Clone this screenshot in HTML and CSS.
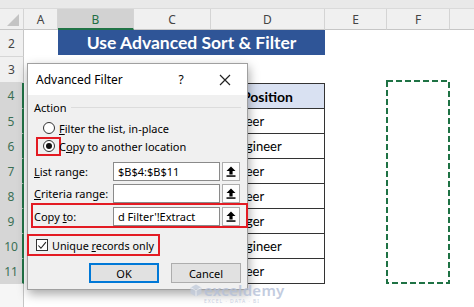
FILE: index.html
```html
<!DOCTYPE html>
<html>
<head>
<meta charset="utf-8">
<link rel="stylesheet" href="styles.css">
</head>
<body>
<div class="sheet">
  <div class="topbar"></div>
  <div class="grid">
    <div class="ch corner"><span class="tri"></span></div>
    <div class="ch">A</div>
    <div class="ch sel">B</div>
    <div class="ch">C</div>
    <div class="ch">D</div>
    <div class="ch">E</div>
    <div class="ch">F</div>
    <div class="ch last"></div>

    <div class="rh">2</div>
    <div class="c"></div>
    <div class="c banner">Use Advanced Sort &amp; Filter</div>
    <div class="c"></div><div class="c"></div><div class="c"></div>

    <div class="rh">3</div>
    <div class="c"></div><div class="c"></div><div class="c"></div><div class="c"></div><div class="c"></div><div class="c"></div><div class="c"></div>

    <div class="rh rsel">4</div>
    <div class="c"></div><div class="c th"></div><div class="c th"></div><div class="c th thd">Position</div><div class="c"></div><div class="c"></div><div class="c"></div>

    <div class="rh rsel">5</div>
    <div class="c"></div><div class="c td"></div><div class="c td"></div><div class="c td tdd">Engineer</div><div class="c"></div><div class="c"></div><div class="c"></div>

    <div class="rh rsel">6</div>
    <div class="c"></div><div class="c td"></div><div class="c td"></div><div class="c td tdd">Sr. Engineer</div><div class="c"></div><div class="c"></div><div class="c"></div>

    <div class="rh rsel">7</div>
    <div class="c"></div><div class="c td"></div><div class="c td"></div><div class="c td tdd">Engineer</div><div class="c"></div><div class="c"></div><div class="c"></div>

    <div class="rh rsel">8</div>
    <div class="c"></div><div class="c td"></div><div class="c td"></div><div class="c td tdd">Engineer</div><div class="c"></div><div class="c"></div><div class="c"></div>

    <div class="rh rsel">9</div>
    <div class="c"></div><div class="c td"></div><div class="c td"></div><div class="c td tdd">Manager</div><div class="c"></div><div class="c"></div><div class="c"></div>

    <div class="rh rsel">10</div>
    <div class="c"></div><div class="c td"></div><div class="c td"></div><div class="c td tdd">Sr. Engineer</div><div class="c"></div><div class="c"></div><div class="c"></div>

    <div class="rh rsel">11</div>
    <div class="c"></div><div class="c td"></div><div class="c td"></div><div class="c td tdd">Engineer</div><div class="c"></div><div class="c"></div><div class="c"></div>

    <div class="rh rlast"></div>
    <div class="c"></div><div class="c"></div><div class="c"></div><div class="c"></div><div class="c"></div><div class="c"></div><div class="c"></div>
  </div>

  <svg class="marquee" width="66" height="206" viewBox="0 0 66 206">
    <rect x="1" y="1" width="62" height="202" fill="none" stroke="#1f7244" stroke-width="2" stroke-dasharray="6 3"/>
  </svg>

  <div class="dialog">
    <div class="titlebar">
      <span class="title">Advanced Filter</span>
      <span class="help">?</span>
      <svg class="close" width="12" height="12" viewBox="0 0 12 12"><path d="M1 1L11 11M11 1L1 11" stroke="#222" stroke-width="1.2"/></svg>
    </div>
    <div class="body">
      <div class="legend"><span>Action</span><span class="gline"></span></div>
      <div class="radio-row">
        <span class="rwrap"><span class="radio"></span></span>
        <span class="rlabel"><u>F</u>ilter the list, in-place</span>
      </div>
      <div class="radio-row">
        <span class="rwrap red"><span class="radio on"></span></span>
        <span class="rlabel">C<u>o</u>py to another location</span>
      </div>
      <div class="field first">
        <span class="flabel"><u>L</u>ist range:</span>
        <span class="input">$B$4:$B$11</span>
        <span class="rbtn"><svg width="10" height="11" viewBox="0 0 10 11"><path d="M5 0.5L9.5 5H6.6V8.5H3.4V5H0.5Z" fill="#000"/><rect x="0.5" y="9.3" width="9" height="1.5" fill="#000"/></svg></span>
      </div>
      <div class="field">
        <span class="flabel"><u>C</u>riteria range:</span>
        <span class="input"></span>
        <span class="rbtn"><svg width="10" height="11" viewBox="0 0 10 11"><path d="M5 0.5L9.5 5H6.6V8.5H3.4V5H0.5Z" fill="#000"/><rect x="0.5" y="9.3" width="9" height="1.5" fill="#000"/></svg></span>
      </div>
      <div class="redrow">
        <div class="field">
          <span class="flabel">Copy <u>t</u>o:</span>
          <span class="input">d Filter'!Extract</span>
          <span class="rbtn"><svg width="10" height="11" viewBox="0 0 10 11"><path d="M5 0.5L9.5 5H6.6V8.5H3.4V5H0.5Z" fill="#000"/><rect x="0.5" y="9.3" width="9" height="1.5" fill="#000"/></svg></span>
        </div>
      </div>
      <div class="unique">
        <span class="cbox"><svg width="11" height="11" viewBox="0 0 11 11"><path d="M1.5 5.5L4.3 8.5L9.8 1.8" fill="none" stroke="#222" stroke-width="1.2"/></svg></span>
        <span class="ulabel">Unique <u>r</u>ecords only</span>
      </div>
      <div class="buttons">
        <span class="btn ok">OK</span>
        <span class="btn">Cancel</span>
      </div>
    </div>
  </div>

  <div class="watermark">
    <svg class="wm-icon" width="12" height="13" viewBox="0 0 12 13"><path d="M6 0.5L11.5 3.6V9.4L6 12.5L0.5 9.4V3.6Z" fill="#c3ccdc"/><path d="M6 6.5L11.5 3.6M6 6.5L0.5 3.6M6 6.5V12.5" stroke="#eef1f6" stroke-width="1"/></svg>
    <div class="wm-text">
      <span class="wm-name">exceldemy</span>
      <span class="wm-sub">EXCEL · DATA · BI</span>
    </div>
  </div>
</div>
</body>
</html>
```

FILE: styles.css
```css
* { box-sizing: border-box; }
html, body { margin: 0; padding: 0; background: #fff; }
.sheet {
  position: relative;
  width: 474px;
  height: 307px;
  overflow: hidden;
  font-family: Lato, "Liberation Sans", sans-serif;
}
.topbar { height: 9px; background: #e9e9e9; border-bottom: 1px solid #dadada; }
.grid {
  display: grid;
  grid-template-columns: 24px 34px 76px 77px 114px 62px 63px 24px;
  grid-template-rows: 21px 27px 26px 26px 25px 25px 25px 25px 25px 25px 25px 30px;
}
.ch {
  background: #f0f0f0;
  border-right: 1px solid #d4d4d4;
  border-bottom: 1px solid #c6c6c6;
  font-family: "Noto Sans", sans-serif;
  font-size: 12px;
  color: #444;
  display: flex;
  align-items: center;
  justify-content: center;
  padding-top: 1px;
}
.ch.sel { background: #d2d2d2; color: #1f6e43; border-bottom: 2px solid #217346; }
.ch.last { border-right: none; }
.corner { position: relative; }
.tri {
  position: absolute;
  right: 4px;
  bottom: 3px;
  width: 0;
  height: 0;
  border-left: 12px solid transparent;
  border-bottom: 12px solid #c4c4c4;
}
.rh {
  background: #f0f0f0;
  border-right: 1px solid #c6c6c6;
  border-bottom: 1px solid #d6d6d6;
  font-family: "Noto Sans", sans-serif;
  font-size: 12px;
  color: #444;
  display: flex;
  align-items: center;
  justify-content: center;
}
.rh.rsel { background: #d6d6d6; color: #3a6f54; border-right: 2px solid #217346; }
.rh.rlast { background: #f6f6f6; border-bottom: none; }
.c { background: #fff; }
.banner {
  grid-column: span 3;
  background: #2f5597;
  color: #fff;
  font-weight: 700;
  font-size: 17.5px;
  display: flex;
  align-items: center;
  justify-content: center;
  margin-bottom: 2px;
}
.th {
  background: #d9e1f2;
  border: 1px solid #333;
  border-left: none;
  font-weight: 700;
  font-size: 14px;
  display: flex;
  align-items: center;
  justify-content: center;
}
.td {
  border-right: 1px solid #333;
  border-bottom: 1px solid #333;
  font-size: 13px;
  display: flex;
  align-items: center;
  padding-left: 3px;
  color: #000;
}
.marquee { position: absolute; left: 386px; top: 80px; }

.dialog {
  position: absolute;
  left: 27px;
  top: 63px;
  width: 221px;
  height: 227px;
  background: #f0f0f0;
  border: 1px solid #a0a0a0;
  box-shadow: 1px 4px 10px rgba(0,0,0,0.35);
  font-family: "Noto Sans", sans-serif;
  font-size: 11px;
  color: #000;
}
.titlebar {
  height: 31px;
  background: #fff;
  display: flex;
  align-items: center;
  padding-left: 8px;
  font-size: 12px;
}
.title { flex: 1; }
.help { width: 14px; text-align: center; margin-right: 31px; font-size: 12px; }
.close { margin-right: 16px; }
.body { padding: 5px 6px 0 6px; display: flex; flex-direction: column; }
.legend { height: 14px; display: flex; align-items: center; gap: 4px; }
.gline { flex: 1; height: 1px; background: #dcdcdc; margin-top: 1px; }
.radio-row { height: 18px; display: flex; align-items: center; }
.legend + .radio-row { margin-top: 5px; }
.rwrap {
  width: 25px;
  height: 19px;
  margin-left: 2px;
  border: 2px solid transparent;
  display: flex;
  align-items: center;
  justify-content: center;
}
.rwrap.red { border-color: #e31b23; }
.radio {
  width: 12px;
  height: 12px;
  border-radius: 50%;
  border: 1px solid #333;
  background: #fff;
  display: flex;
  align-items: center;
  justify-content: center;
}
.radio.on::after {
  content: "";
  width: 6px;
  height: 6px;
  border-radius: 50%;
  background: #111;
}
.rlabel { margin-left: -2px; }
.field { display: flex; align-items: center; height: 19px; width: 206px; }
.field.first { margin-top: 7px; }
.field + .field { margin-top: 3px; }
.flabel { width: 79px; }
.input {
  width: 107px;
  height: 19px;
  background: #fff;
  border: 1px solid #8a8a8a;
  padding-left: 4px;
  display: flex;
  align-items: center;
  white-space: nowrap;
  overflow: hidden;
}
.rbtn {
  width: 18px;
  height: 19px;
  margin-left: 2px;
  background: #fdfdfd;
  border: 1px solid #adadad;
  display: flex;
  align-items: center;
  justify-content: center;
}
.redrow {
  width: 217px;
  margin-left: -3px;
  border: 2px solid #e31b23;
  padding: 2px 6px 0 1px;
}
.unique {
  width: 133px;
  height: 22px;
  margin-top: 6px;
  margin-left: -7px;
  border: 2px solid #e31b23;
  padding-left: 7px;
  display: flex;
  align-items: center;
}
.cbox {
  width: 12px;
  height: 12px;
  border: 1px solid #333;
  background: #fff;
  display: flex;
  align-items: center;
  justify-content: center;
}
.ulabel { margin-left: 4px; font-size: 10.8px; }
.buttons { display: flex; justify-content: flex-end; gap: 12px; margin-top: 7px; }
.btn {
  width: 70px;
  height: 20px;
  background: #e1e1e1;
  border: 1px solid #adadad;
  display: flex;
  align-items: center;
  justify-content: center;
}
.btn.ok { border: 2px solid #0078d7; }

.watermark {
  position: absolute;
  left: 190px;
  top: 284px;
  display: flex;
  align-items: flex-start;
  gap: 2px;
  opacity: 0.8;
}
.wm-icon { margin-top: 0; }
.wm-text { display: flex; flex-direction: column; line-height: 1; }
.wm-name { font-family: "Noto Sans", sans-serif; font-size: 15px; line-height: 12px; color: #b4c0d8; font-weight: 600; letter-spacing: 0.3px; }
.wm-sub { font-family: "Noto Sans", sans-serif; font-size: 5px; color: #bcc6da; letter-spacing: 1px; margin-top: 3px; }
```
